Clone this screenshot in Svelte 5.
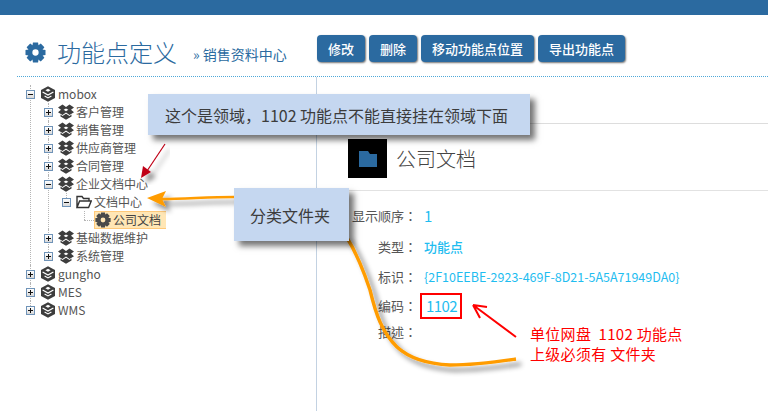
<script>
  // Function point page: header, tree on the left, detail on the right, callouts on top
  const tree = [
    {
      label: "mobox", icon: "cube", open: true,
      children: [
        { label: "客户管理", icon: "box" },
        { label: "销售管理", icon: "box" },
        { label: "供应商管理", icon: "box" },
        { label: "合同管理", icon: "box" },
        {
          label: "企业文档中心", icon: "box", open: true,
          children: [
            {
              label: "文档中心", icon: "folder", open: true,
              children: [{ label: "公司文档", icon: "gear", selected: true, leaf: true }],
            },
          ],
        },
        { label: "基础数据维护", icon: "box" },
        { label: "系统管理", icon: "box" },
      ],
    },
    { label: "gungho", icon: "cube" },
    { label: "MES", icon: "cube" },
    { label: "WMS", icon: "cube" },
  ];

  const buttons = ["修改", "删除", "移动功能点位置", "导出功能点"];

  const details = [
    { label: "显示顺序：", value: "1", kind: "num" },
    { label: "类型：", value: "功能点", kind: "type" },
    { label: "标识：", value: "{2F10EEBE-2923-469F-8D21-5A5A71949DA0}", kind: "guid" },
    { label: "编码：", value: "1102", kind: "code" },
    { label: "描述：", value: "", kind: "desc" },
  ];

  // 8 tooth gear centred on 12,12
  function gearPath() {
    const pts = [];
    for (let i = 0; i < 8; i++) {
      const a = (i * Math.PI) / 4;
      for (const [r, o] of [[8.6, -0.42], [11.8, -0.25], [11.8, 0.25], [8.6, 0.42]]) {
        pts.push(`${(12 + r * Math.sin(a + o)).toFixed(2)} ${(12 - r * Math.cos(a + o)).toFixed(2)}`);
      }
    }
    return `M${pts.join("L")}Z M12 8.4a3.6 3.6 0 1 0 0 7.2a3.6 3.6 0 1 0 0-7.2Z`;
  }
  const gear = gearPath();
</script>

{#snippet icon(name)}
  {#if name === "cube"}
    <svg class="ico" viewBox="0 0 16 16">
      <path class="dark" d="M8 0.2 15 4v8L8 15.8 1 12V4Z" />
      <path class="cut" d="M8 2.8 10.6 4.3 8 5.8 5.4 4.3Z" />
      <path class="slit" d="M2.6 6 8 9 13.4 6" />
      <path class="slit" d="M4.6 10 8 11.9 11.4 10" />
    </svg>
  {:else if name === "box"}
    <svg class="ico" viewBox="0 0 16 16">
      <path class="dark" d="M0 3.5 4.5 0.5 8 3 11.5 0.5 16 3.5 13 5.8 16 8.2 11.5 11 8 8.6 4.5 11 0 8.2 3 5.8Z" />
      <path class="cut" d="M5.6 5.8 8 4.4 10.4 5.8 8 7.2Z" />
      <path class="dark" d="M2.5 10.5 4.5 12 8 9.8 11.5 12 13.5 10.5V12.6L8 15.8 2.5 12.6Z" />
    </svg>
  {:else if name === "folder"}
    <svg class="ico" viewBox="0 0 16 16">
      <path class="outline" d="M1 13.5V2.5H6L7.5 4.5H13V7M1 13.5H12.6L15.2 7H3.6Z" />
    </svg>
  {:else}
    <svg class="ico" viewBox="0 0 24 24">
      <path class="gear" fill-rule="evenodd" d={gear} />
    </svg>
  {/if}
{/snippet}

{#snippet nodes(items)}
  <ul>
    {#each items as node}
      <li class:leaf={node.leaf}>
        <div class="row">
          {#if node.leaf}
            <span class="dots"></span>
          {:else}
            <span class="toggle" class:open={node.open}></span>
          {/if}
          <span class="label" class:selected={node.selected}>
            {@render icon(node.icon)}
            <span>{node.label}</span>
          </span>
        </div>
        {#if node.children}
          {@render nodes(node.children)}
        {/if}
      </li>
    {/each}
  </ul>
{/snippet}

<div class="page">
  <div class="topbar"></div>

  <header>
    <svg class="head-gear" viewBox="0 0 24 24"><path fill-rule="evenodd" d={gear} /></svg>
    <h1>功能点定义</h1>
    <small>» 销售资料中心</small>
    <div class="actions">
      {#each buttons as text}
        <button type="button">{text}</button>
      {/each}
    </div>
  </header>

  <main>
    <aside class="tree">
      {@render nodes(tree)}
    </aside>
    <section class="detail">
      <div class="head">
        <div class="badge">
          <svg viewBox="0 0 18 16"><path d="M0 0H9L11 3H18V16H0Z" /><path class="tab" d="M10.5 1H18V2H11.2Z" /></svg>
        </div>
        <h2>公司文档</h2>
      </div>
      <dl>
        {#each details as item}
          <dt class={item.kind}>{item.label}</dt>
          <dd class={item.kind}>{item.value}</dd>
        {/each}
      </dl>
    </section>
  </main>

  <!-- annotations drawn over the page -->
  <svg class="marks" viewBox="0 0 768 411">
    <defs>
      <filter id="soft" x="-20%" y="-20%" width="140%" height="140%">
        <feDropShadow dx="5" dy="5" stdDeviation="2.5" flood-color="#000" flood-opacity="0.45" />
      </filter>
    </defs>
    <g filter="url(#soft)">
      <path class="red-dark" d="M165 144 145 174" />
      <path class="fill-dark" d="M141 178 143 166 151 172Z" />
    </g>
    <g filter="url(#soft)">
      <path class="orange" d="M346 236C356 252 365 275 370 290C376 315 382 332 397 347C410 359 430 364 450 365C475 365 495 362 516 359" />
      <path class="orange-thin" d="M234 197C208 197 185 199 162 199" />
      <path class="fill-orange" d="M147 198 166 191 162 199 166 207Z" />
    </g>
    <path class="red" d="M516 337 473 305M473 305 487 307M473 305 480 318" />
  </svg>

  <div class="callout one">这个是领域，1102 功能点不能直接挂在领域下面</div>
  <div class="callout two">分类文件夹</div>
  <p class="note">单位网盘&nbsp; 1102 功能点<br />上级必须有 文件夹</p>
</div>

<style>
  :global(body) {
    margin: 0;
    background: #fff;
  }

  .page {
    position: relative;
    width: 768px;
    height: 411px;
    overflow: hidden;
    font-family: "Noto Sans CJK SC", "Noto Sans", sans-serif;
    color: #555;
  }

  .topbar {
    height: 15px;
    background: #2b6aa0;
  }

  header {
    display: flex;
    align-items: center;
    height: 62px;
    margin-left: 17px;
    padding: 6px 0 0 8px;
    box-sizing: border-box;
    border-bottom: 1px dotted #4fa8d8;
    color: #2b6aa0;
  }

  .head-gear {
    width: 21px;
    height: 21px;
    fill: #2b6aa0;
    flex: none;
    margin-top: 7px;
  }

  h1 {
    margin: 7px 0 0 11px;
    font-size: 24px;
    font-weight: 300;
    line-height: 30px;
  }

  small {
    margin: 11px 0 0 16px;
    width: 124px;
    font-size: 14px;
    line-height: 18px;
    white-space: nowrap;
  }

  .actions {
    display: flex;
    gap: 4px;
  }

  button {
    height: 27px;
    padding: 0 11px;
    border: none;
    border-radius: 4px;
    background: #2b6aa0;
    color: #fff;
    font: 500 13px/27px "Noto Sans CJK SC", sans-serif;
    box-shadow: 1px 1px 2px rgba(0, 0, 0, 0.55);
  }

  main {
    display: flex;
    height: 334px;
  }

  .tree {
    width: 317px;
    flex: none;
    box-sizing: border-box;
    padding: 8px 0 0 26px;
    border-right: 1px solid #c3d2e2;
    font-size: 12px;
    color: #555;
  }

  ul {
    list-style: none;
    margin: 0;
    padding: 0;
  }

  li {
    position: relative;
  }

  li > ul {
    margin-left: 18px;
  }

  li::before {
    content: "";
    position: absolute;
    left: 4px;
    top: 0;
    bottom: 0;
    border-left: 1px dotted #b5b5b5;
  }

  li:last-child::before {
    bottom: auto;
    height: 9px;
  }

  .row {
    position: relative;
    display: flex;
    align-items: center;
    height: 18px;
  }

  .toggle {
    position: relative;
    width: 9px;
    height: 9px;
    box-sizing: border-box;
    flex: none;
    margin-right: 5px;
    border: 1px solid #6f93b8;
    background: linear-gradient(#fff, #d8d8d8);
  }

  .toggle::before,
  .toggle:not(.open)::after {
    content: "";
    position: absolute;
    background: #111;
  }

  .toggle::before {
    left: 1px;
    right: 1px;
    top: 3px;
    height: 1px;
  }

  .toggle:not(.open)::after {
    top: 1px;
    bottom: 1px;
    left: 3px;
    width: 1px;
  }

  .dots {
    width: 10px;
    flex: none;
    margin-left: 4px;
    border-top: 1px dotted #b5b5b5;
  }

  .label {
    display: flex;
    align-items: center;
    gap: 2px;
    height: 18px;
    line-height: 18px;
    white-space: nowrap;
  }

  .label.selected {
    height: 16px;
    width: 71px;
    background: #ffe6b5;
    border: 1px solid #ffc97a;
    border-width: 1px 0 1px 1px;
    color: #444;
  }

  .ico {
    width: 16px;
    height: 16px;
    flex: none;
  }

  .dark {
    fill: #3d3d3d;
  }

  .cut {
    fill: #fff;
  }

  .slit {
    fill: none;
    stroke: #fff;
    stroke-width: 1.2;
  }

  .outline {
    fill: none;
    stroke: #333;
    stroke-width: 1.4;
  }

  .gear {
    fill: #4a4a4a;
  }

  .detail {
    flex: 1;
    padding: 62px 0 0 31px;
    position: relative;
  }

  .head {
    display: flex;
    align-items: center;
    gap: 9px;
    height: 39px;
    padding-bottom: 13px;
    position: relative;
  }

  .head::before {
    content: "";
    position: absolute;
    left: -31px;
    right: 0;
    top: -16px;
    border-top: 1px solid #ddd;
  }

  .head::after {
    content: "";
    position: absolute;
    left: -31px;
    right: 0;
    bottom: 0;
    border-top: 1px solid #e2e2e2;
  }

  .badge {
    display: flex;
    align-items: center;
    justify-content: center;
    width: 39px;
    height: 39px;
    background: #000;
  }

  .badge svg {
    width: 18px;
    height: 16px;
    fill: #2b6aa0;
  }

  .badge .tab {
    fill: #000;
  }

  h2 {
    margin: 0;
    font-size: 20px;
    font-weight: 300;
    color: #444;
  }

  dl {
    display: grid;
    grid-template-columns: 65px 1fr;
    column-gap: 7px;
    margin: 12px 0 0 4px;
    font-size: 13px;
  }

  dt {
    text-align: right;
    color: #555;
    height: 30px;
    line-height: 28px;
    font-family: "Noto Sans CJK TC", sans-serif;
  }

  dd {
    margin: 0;
    height: 30px;
    line-height: 28px;
    color: #1fbdf0;
  }

  dt.num {
    line-height: 26px;
  }

  dd.num {
    font-size: 15px;
    line-height: 26px;
  }

  dd.type {
    font-size: 13px;
    font-weight: 500;
  }

  dd.guid {
    font-size: 12.5px;
    white-space: nowrap;
  }

  dt.code {
    height: 26px;
    line-height: 26px;
  }

  dd.code {
    justify-self: start;
    width: 42px;
    height: 26px;
    margin-left: -4px;
    padding-left: 4px;
    box-sizing: border-box;
    border: 2px solid #f00;
    font-size: 15px;
    line-height: 21px;
    letter-spacing: -0.6px;
  }

  dt.desc,
  dd.desc {
    line-height: 26px;
  }

  .marks {
    position: absolute;
    inset: 0;
    width: 768px;
    height: 411px;
    pointer-events: none;
  }

  .marks path {
    fill: none;
  }

  .marks .red-dark {
    stroke: #c00018;
    stroke-width: 1.2;
  }

  .marks .fill-dark {
    fill: #c00018;
  }

  .marks .orange {
    stroke: #ff9c00;
    stroke-width: 3.4;
  }

  .marks .orange-thin {
    stroke: #ff9c00;
    stroke-width: 2.5;
  }

  .marks .fill-orange {
    fill: #ff9c00;
  }

  .marks .red {
    stroke: #f00;
    stroke-width: 2;
  }

  .callout {
    position: absolute;
    display: flex;
    align-items: center;
    box-sizing: border-box;
    background: #c5d7f0;
    color: #3c3c3c;
    font-size: 16px;
    box-shadow: 5px 5px 6px rgba(0, 0, 0, 0.55);
  }

  .callout.one {
    left: 148px;
    top: 94px;
    width: 382px;
    height: 41px;
    padding-left: 17px;
  }

  .callout.two {
    left: 234px;
    top: 188px;
    width: 115px;
    height: 53px;
    padding-left: 16px;
  }

  .note {
    position: absolute;
    left: 530px;
    top: 324px;
    margin: 0;
    color: #f00;
    font-size: 15px;
    line-height: 20px;
    letter-spacing: 0.3px;
    white-space: nowrap;
  }
</style>
